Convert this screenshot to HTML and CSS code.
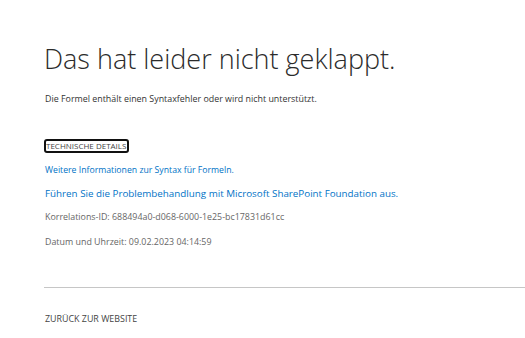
FILE: index.html
```html
<!DOCTYPE html>
<html lang="de">
<head>
    <meta charset="UTF-8">
    <title>Fehler</title>
    <link rel="stylesheet" href="styles.css">
</head>
<body>
    <div class="page">
        <h1 class="title">Das hat leider nicht geklappt.</h1>
        <p class="message">Die Formel enthält einen Syntaxfehler oder wird nicht unterstützt.</p>
        <div class="details">
            <a class="details-toggle" href="#">TECHNISCHE DETAILS</a>
        </div>
        <p class="link-line"><a href="#">Weitere Informationen zur Syntax für Formeln.</a></p>
        <p class="link-line big"><a href="#">Führen Sie die Problembehandlung mit Microsoft SharePoint Foundation aus.</a></p>
        <p class="info">Korrelations-ID: 688494a0-d068-6000-1e25-bc17831d61cc</p>
        <p class="info date">Datum und Uhrzeit: 09.02.2023 04:14:59</p>
    </div>
    <div class="footer">
        <a class="back" href="#">ZURÜCK ZUR WEBSITE</a>
    </div>
</body>
</html>
```

FILE: styles.css
```css
body {
    margin: 0;
    background-color: #ffffff;
    font-family: 'Open Sans', sans-serif;
    color: #444444;
}
.page {
    padding: 38px 0 0 44px;
}
.title {
    font-weight: 300;
    font-size: 27px;
    color: #2b2b2b;
    margin: 0;
    line-height: 42px;
}
.message {
    font-size: 8.9px;
    line-height: 14px;
    margin: 12px 0 0 1px;
    color: #333333;
}
.details {
    margin-top: 33px;
    line-height: 14px;
}
.details-toggle {
    display: inline-block;
    font-size: 8px;
    color: #444444;
    text-decoration: none;
    border: 2px solid #111111;
    border-radius: 3px;
    padding: 0 1px 0 0;
    line-height: 10px;
    vertical-align: top;
}
.link-line {
    font-size: 8.7px;
    line-height: 14px;
    margin: 10px 0 0 1px;
}
.link-line.big {
    font-size: 9.8px;
}
.link-line a {
    color: #0072c6;
    text-decoration: none;
}
.info {
    font-size: 8.9px;
    line-height: 14px;
    color: #666666;
    margin: 9px 0 0 1px;
}
.info.date {
    margin-top: 11px;
}
.footer {
    margin: 38px 0 0 44px;
    border-top: 1px solid #c6c6c6;
    padding-top: 21px;
    line-height: 14px;
}
.back {
    font-size: 8.9px;
    color: #444444;
    text-decoration: none;
    margin-left: 1px;
}
```
